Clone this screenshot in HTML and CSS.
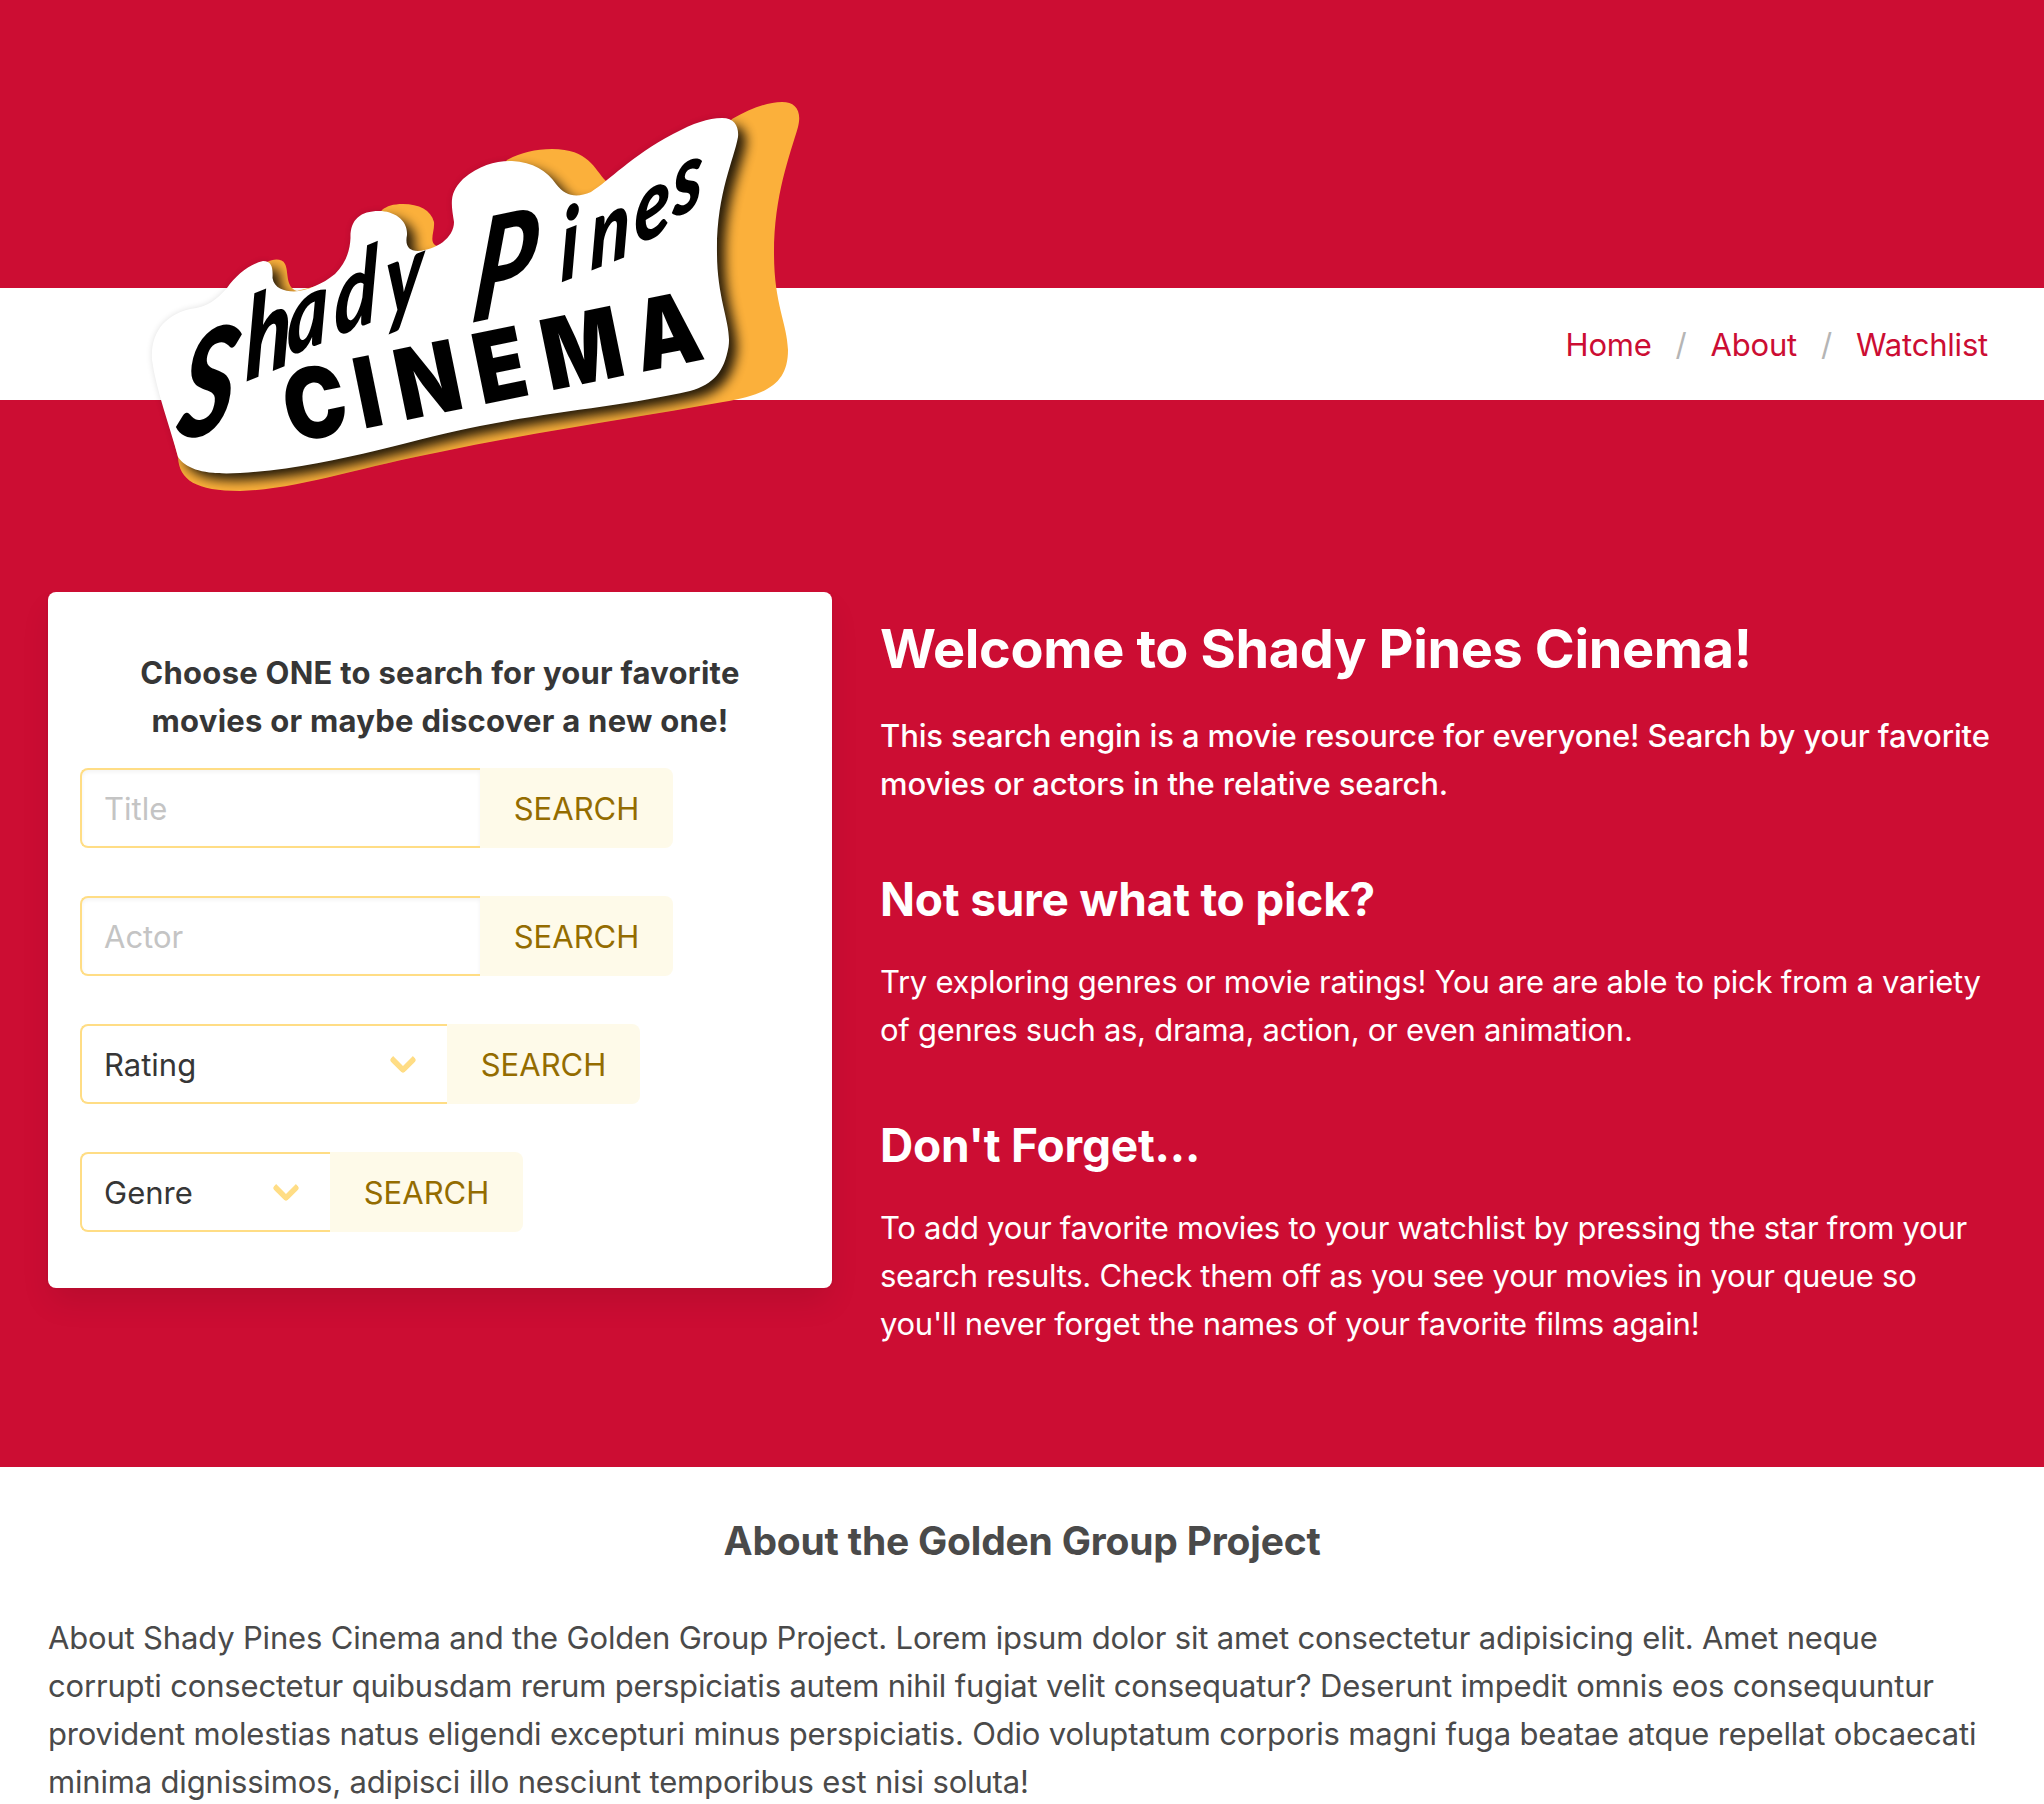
FILE: index.html
```html
<!DOCTYPE html>
<html lang="en">
<head>
<meta charset="utf-8">
<title>Shady Pines Cinema</title>
<link rel="stylesheet" href="styles.css">
</head>
<body>
<header class="masthead">
  <div class="navbar">
    <ul class="breadcrumb">
      <li><a href="#">Home</a></li>
      <li><a href="#about">About</a></li>
      <li><a href="#">Watchlist</a></li>
    </ul>
  </div>
  <svg class="logo" viewBox="140 90 672 412" role="img" aria-label="Shady Pines Cinema">
    <defs>
      <path id="plate" d="M152 360C150 330 168 314 190 309C208 307 217 299 227 288C236 275 250 264 263 261C272 261 273 268 272.500 278C274 288 284 291.500 294 291.500C306 291 323 284 335 274C347 262 350 249 350.500 238C350 220 360 211 379 211C394 211 408 220 407 235C405 245 408 251 418 251C436 250 454 238 454 222C451 203 449 193 463 179C480 165 495 161 512 161C533 162 547 171 556 184C566 197 577 198 591 192C610 180 630 157 673 134C694 123 708 118 722 118C735 118 739 127 738 137C734 160 716 195 717 253C717 300 732 325 728.500 347C724 372 714 384 690 391C630 405 550 412 480 426C420 437 330 468 240 473C206 475 187 470 178 457C170 427 156 390 152 360Z"/>
      <path id="backing" d="M153 362L161 392L178 457C179 480 196 491 240 491C300 489 360 467 440 452C540 431 640 417 723 402C765 395 788 385 788 350C787 322 774 305 774 253C774 195 790 155 798 127C802 111 796 102 782 102C767 102 750 109 732 119L690 180L606 181C594 169 589 149 552 149C535 149 520 153 507 160L450 240L437 246C428 242 435 232 434 222C431 210 419 204 403 204C393 204 387 206 382 210L340 280L297 291C285 287 289 272 285 264C282 258 273 259 267 262L230 300L190 330Z"/>
      <clipPath id="backing-area"><use href="#backing"/></clipPath>
      <filter id="soft" x="-10%" y="-10%" width="120%" height="120%"><feGaussianBlur stdDeviation="6"/></filter>
      <filter id="faint" x="-10%" y="-10%" width="120%" height="120%"><feGaussianBlur stdDeviation="3"/></filter>
    </defs>
    <use href="#plate" fill="#000" opacity=".12" filter="url(#faint)"/>
    <use href="#backing" fill="#fbb03b"/>
    <g clip-path="url(#backing-area)">
      <use href="#plate" transform="translate(8 7)" fill="#000" opacity=".85" filter="url(#soft)"/>
    </g>
    <use href="#plate" fill="#fff"/>
    <text class="logo-script" transform="matrix(.75 -.3 0 1 0 0)"><tspan x="233" y="510" font-size="144" rotate="10">S</tspan><tspan x="327" y="480" font-size="114">h</tspan><tspan x="383" y="472" font-size="104">a</tspan><tspan x="446" y="471" font-size="106">d</tspan><tspan x="514" y="473" font-size="102">y</tspan> <tspan x="626" y="511" font-size="140" rotate="8">P</tspan><tspan x="747" y="507" font-size="100">i</tspan><tspan x="787" y="507" font-size="98">n</tspan><tspan x="846" y="499" font-size="98">e</tspan><tspan x="897" y="487" font-size="98">s</tspan></text>
    <text class="logo-block" transform="translate(367 428) rotate(-11.5) scale(.88 1.03)" x="-88 -5 42 133 212 318">CINEMA</text>
  </svg>
</header>
<main class="hero">
  <section class="box">
    <h2 class="box-title">Choose ONE to search for your favorite<br>movies or maybe discover a new one!</h2>
    <form class="searches">
      <div class="field"><input class="input" type="text" placeholder="Title"><button class="button" type="button">SEARCH</button></div>
      <div class="field"><input class="input" type="text" placeholder="Actor"><button class="button" type="button">SEARCH</button></div>
      <div class="field"><div class="select rating">Rating</div><button class="button" type="button">SEARCH</button></div>
      <div class="field"><div class="select genre">Genre</div><button class="button" type="button">SEARCH</button></div>
    </form>
  </section>
  <section class="intro">
    <h1 class="welcome">Welcome to Shady Pines Cinema!</h1>
    <p class="lead">This search engin is a movie resource for everyone! Search by your favorite<br>movies or actors in the relative search.</p>
    <h2 class="sub">Not sure what to pick?</h2>
    <p class="copy">Try exploring genres or movie ratings! You are are able to pick from a variety<br>of genres such as, drama, action, or even animation.</p>
    <h2 class="sub">Don't Forget...</h2>
    <p class="copy">To add your favorite movies to your watchlist by pressing the star from your<br>search results. Check them off as you see your movies in your queue so<br>you'll never forget the names of your favorite films again!</p>
  </section>
</main>
<footer class="about" id="about">
  <h2 class="about-title">About the Golden Group Project</h2>
  <p class="about-text">About Shady Pines Cinema and the Golden Group Project. Lorem ipsum dolor sit amet consectetur adipisicing elit. Amet neque<br>corrupti consectetur quibusdam rerum perspiciatis autem nihil fugiat velit consequatur? Deserunt impedit omnis eos consequuntur<br>provident molestias natus eligendi excepturi minus perspiciatis. Odio voluptatum corporis magni fuga beatae atque repellat obcaecati<br>minima dignissimos, adipisci illo nesciunt temporibus est nisi soluta!</p>
</footer>
</body>
</html>
```
FILE: styles.css
```css
*, *::before, *::after { box-sizing: border-box; margin: 0; padding: 0; }

body {
  font-family: Inter, "Liberation Sans", sans-serif;
  font-size: 31px;
  line-height: 48px;
  color: #4a4a4a;
  background: #fff;
  overflow: hidden;
  white-space: nowrap;
}

.masthead {
  position: relative;
  padding-top: 288px;
  height: 592px;
  background: #cc0d33;
}

.navbar {
  display: flex;
  justify-content: flex-end;
  align-items: center;
  height: 112px;
  padding: 2px 32px 0 0;
  background: #fff;
}

.breadcrumb { display: flex; list-style: none; letter-spacing: -.2px; }
.breadcrumb li { display: flex; }
.breadcrumb li + li::before { content: "/"; color: #b5b5b5; }
.breadcrumb a { padding: 0 24px; color: #cc0d33; text-decoration: none; }

/* The sign overlaps the white bar */
.logo { position: absolute; left: 140px; top: 90px; width: 672px; height: 412px; }
.logo-script { font-family: Lato, sans-serif; font-style: italic; font-weight: 900; }
.logo-block {
  font-family: Inter, sans-serif;
  font-weight: 900;
  font-size: 95px;
}

.hero {
  display: flex;
  gap: 48px;
  height: 875px;
  padding: 0 48px;
  background: #cc0d33;
}

.box {
  flex: none;
  width: 784px;
  height: 696px;
  padding: 57px 32px 0;
  border-radius: 8px;
  background: #fff;
  box-shadow: 0 16px 32px -4px rgba(10, 10, 10, .1), 0 0 0 2px rgba(10, 10, 10, .02);
}

.box-title { font-size: 31px; font-weight: 700; letter-spacing: .26px; color: #363636; text-align: center; }
.searches { display: flex; flex-direction: column; gap: 48px; margin-top: 23px; }
.field { display: flex; height: 80px; }

.input, .select {
  height: 80px;
  border: 2px solid #ffdd85;
  border-right: 0;
  border-radius: 8px 0 0 8px;
  padding: 0 0 0 22px;
  font: inherit;
  color: #363636;
  background: #fff;
}
.input { width: 400px; outline: 0; box-shadow: inset 0 2px 4px rgba(10, 10, 10, .05); }
.input::placeholder { color: #c4c4c4; opacity: 1; }

.select {
  display: flex;
  align-items: center;
  justify-content: space-between;
  padding-top: 1px;
  padding-right: 34px;
}
.select::after {
  content: "";
  width: 20px;
  height: 20px;
  margin-top: -9px;
  border: solid #ffdd85;
  border-width: 0 0 6px 6px;
  border-radius: 4px;
  transform: rotate(-45deg);
}
.rating { width: 367px; }
.genre { width: 250px; }

.button {
  width: 193px;
  height: 80px;
  padding-top: 2px;
  border: 0;
  border-radius: 0 8px 8px 0;
  font: inherit;
  color: #946c00;
  background: #fefae9;
}

.intro { color: #fff; padding-top: 25px; }
.welcome { font-size: 54px; font-weight: 700; line-height: 63px; letter-spacing: -.36px; }
.lead { margin-top: 32px; font-weight: 500; letter-spacing: -.11px; }
.sub { margin-top: 65px; font-size: 46px; font-weight: 700; line-height: 52px; letter-spacing: -.22px; }
.copy { margin-top: 33px; letter-spacing: -.27px; }

.about { padding: 50px 48px 0; }
.about-title { font-size: 39px; font-weight: 700; line-height: 48px; letter-spacing: -.2px; text-align: center; }
.about-text { margin-top: 49px; letter-spacing: -.175px; }
```
